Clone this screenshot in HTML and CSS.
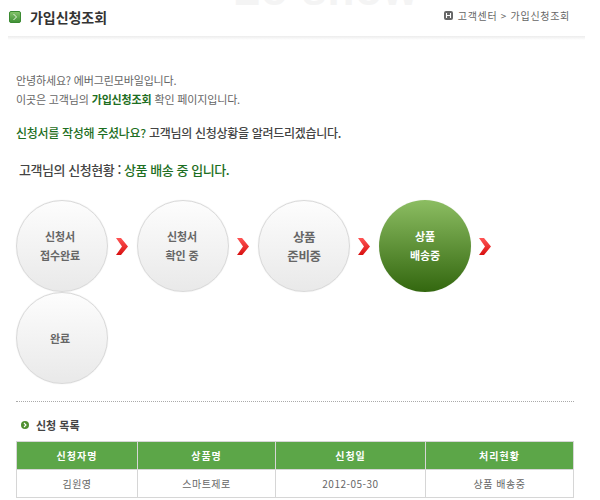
FILE: index.html
```html
<!DOCTYPE html>
<html lang="ko">
<head>
<meta charset="utf-8">
<title>가입신청조회</title>
<link rel="stylesheet" href="styles.css">
</head>
<body>
<div class="page">
  <div class="ghost">Lo show</div>
  <header class="head">
    <div class="head-title">
      <svg class="head-icon" width="12" height="12" viewBox="0 0 12 12"><defs><linearGradient id="g1" x1="0" y1="0" x2="0" y2="1"><stop offset="0" stop-color="#86c56c"/><stop offset="1" stop-color="#3f8f35"/></linearGradient></defs><rect x=".5" y=".5" width="11" height="11" rx="1.5" fill="url(#g1)" stroke="#3b8a32"/><path d="M4.5 3 7.5 6 4.5 9" fill="none" stroke="#e8f5e0" stroke-width="1"/></svg>
      <h1>가입신청조회</h1>
    </div>
    <div class="crumb">
      <svg class="crumb-icon" width="9" height="9" viewBox="0 0 9 9"><rect width="9" height="9" rx="2" fill="#666"/><path d="M2.5 2v5M6.5 2v5M2.5 4.5h4" stroke="#fff" stroke-width="1.1"/></svg>
      <span>고객센터 &gt; 가입신청조회</span>
    </div>
  </header>
  <main class="body">
    <p class="intro">안녕하세요? 에버그린모바일입니다.<br>이곳은 고객님의 <b class="green">가입신청조회</b> 확인 페이지입니다.</p>
    <p class="ask"><span class="green">신청서를 작성해 주셨나요?</span> 고객님의 신청상황을 알려드리겠습니다.</p>
    <p class="status">고객님의 신청현황 : <span class="green">상품 배송 중 입니다.</span></p>
    <div class="steps">
      <div class="step"><div class="circle small shift">신청서<br>접수완료</div><svg class="arrow" width="12" height="17" viewBox="0 0 12 17"><defs><linearGradient id="r" x1="0" y1="0" x2="0" y2="1"><stop offset="0" stop-color="#f55"/><stop offset="1" stop-color="#d81010"/></linearGradient></defs><path d="M0 0H5L12 8.5 5 17H0L6 8.5Z" fill="url(#r)"/></svg></div>
      <div class="step"><div class="circle small shift-slight">신청서<br>확인 중</div><svg class="arrow" width="12" height="17" viewBox="0 0 12 17"><path d="M0 0H5L12 8.5 5 17H0L6 8.5Z" fill="url(#r)"/></svg></div>
      <div class="step"><div class="circle">상품<br>준비중</div><svg class="arrow" width="12" height="17" viewBox="0 0 12 17"><path d="M0 0H5L12 8.5 5 17H0L6 8.5Z" fill="url(#r)"/></svg></div>
      <div class="step"><div class="circle active small">상품<br>배송중</div><svg class="arrow" width="12" height="17" viewBox="0 0 12 17"><path d="M0 0H5L12 8.5 5 17H0L6 8.5Z" fill="url(#r)"/></svg></div>
      <div class="step"><div class="circle small shift">완료</div></div>
    </div>
    <div class="rule"></div>
    <h2 class="list-title"><svg width="8" height="8" viewBox="0 0 8 8"><circle cx="4" cy="4" r="4" fill="#4f8f2f"/><path d="M3 2 5 4 3 6" fill="none" stroke="#fff" stroke-width="1.1"/></svg>신청 목록</h2>
    <table class="list">
      <thead><tr><th>신청자명</th><th>상품명</th><th>신청일</th><th>처리현황</th></tr></thead>
      <tbody><tr><td>김원영</td><td>스마트제로</td><td>2012-05-30</td><td>상품 배송중</td></tr></tbody>
    </table>
  </main>
</div>
</body>
</html>
```
FILE: styles.css
```css
* { box-sizing: border-box; }
html, body { margin: 0; padding: 0; background: #fff; }
body { font-family: "Noto Sans CJK KR", "Noto Sans", sans-serif; color: #666; overflow: hidden; }
.page { position: relative; width: 600px; height: 500px; overflow: hidden; }
.ghost { position: absolute; left: 233px; top: -35px; font: 700 44px "Liberation Sans", sans-serif; color: #f4f4f4; letter-spacing: 1px; }
.head { position: relative; margin-left: 8px; width: 577px; height: 40px; padding: 0 15px 0 1px; display: flex; justify-content: space-between; background: linear-gradient(rgba(255,255,255,0) 36px, #ececec 36px, #fff 40px); }
.head-title { display: flex; align-items: flex-start; padding-top: 11px; }
.head-icon { margin-right: 9px; }
h1 { margin: -3px 0 0; font-size: 14px; line-height: 18px; font-weight: 700; color: #333; letter-spacing: -0.05px; }
.crumb { display: flex; align-items: center; height: 31px; font-size: 10px; letter-spacing: 0.7px; color: #666; }
.crumb-icon { margin-right: 5px; }
.body { padding: 0 26px 0 16px; }
.intro { margin: 31px 0 0; font-size: 11px; line-height: 19px; color: #666; letter-spacing: -0.15px; }
.intro b { font-weight: 700; }
.green { color: #1d6e22; }
.ask { margin: 14px 0 0; font-size: 12px; line-height: 20px; font-weight: 500; color: #444; letter-spacing: -0.3px; }
.ask .green { font-weight: 500; }
.status { margin: 17px 0 0 3px; font-size: 13px; line-height: 20px; font-weight: 500; color: #444; letter-spacing: -0.45px; }
.status .green { font-weight: 500; }
.steps { display: flex; flex-wrap: wrap; margin-top: 20px; }
.step { display: flex; align-items: center; width: 121px; height: 92px; }
.circle { width: 92px; height: 92px; flex: none; border-radius: 50%; border: 1px solid #d9d9d9; background: linear-gradient(#fdfdfd, #e9e9e9); display: flex; align-items: center; justify-content: center; text-align: center; font-size: 12.5px; line-height: 19px; font-weight: 700; color: #666; box-shadow: 0 0 1px #ddd; letter-spacing: -0.4px; }
.circle.small { font-size: 11px; letter-spacing: -0.1px; }
.circle.shift { padding-right: 4px; }
.circle.shift-slight { padding-right: 2px; }
.circle.active { border: none; background: linear-gradient(#8cbd62, #33670f); color: #fff; }
.arrow { margin-left: 8px; }
.rule { margin-top: 17px; border-top: 1px dotted #aaa; }
.list-title { display: flex; align-items: center; gap: 7px; margin: 14px 0 0; padding-left: 5px; height: 18px; font-size: 11px; font-weight: 700; color: #444; }
.list { width: 558px; margin-top: 7px; border-collapse: collapse; table-layout: fixed; font-size: 10px; }
.list th { height: 28px; padding: 0; background: #5ca648; color: #fff; font-weight: 700; border: 1px solid #d6d6d6; letter-spacing: 1px; }
.list td { height: 28px; padding: 0; text-align: center; color: #666; border: 1px solid #d6d6d6; letter-spacing: 0.5px; }
.list th:nth-child(1) { width: 121px; }
.list th:nth-child(2) { width: 138px; }
.list th:nth-child(3) { width: 150px; }
```
